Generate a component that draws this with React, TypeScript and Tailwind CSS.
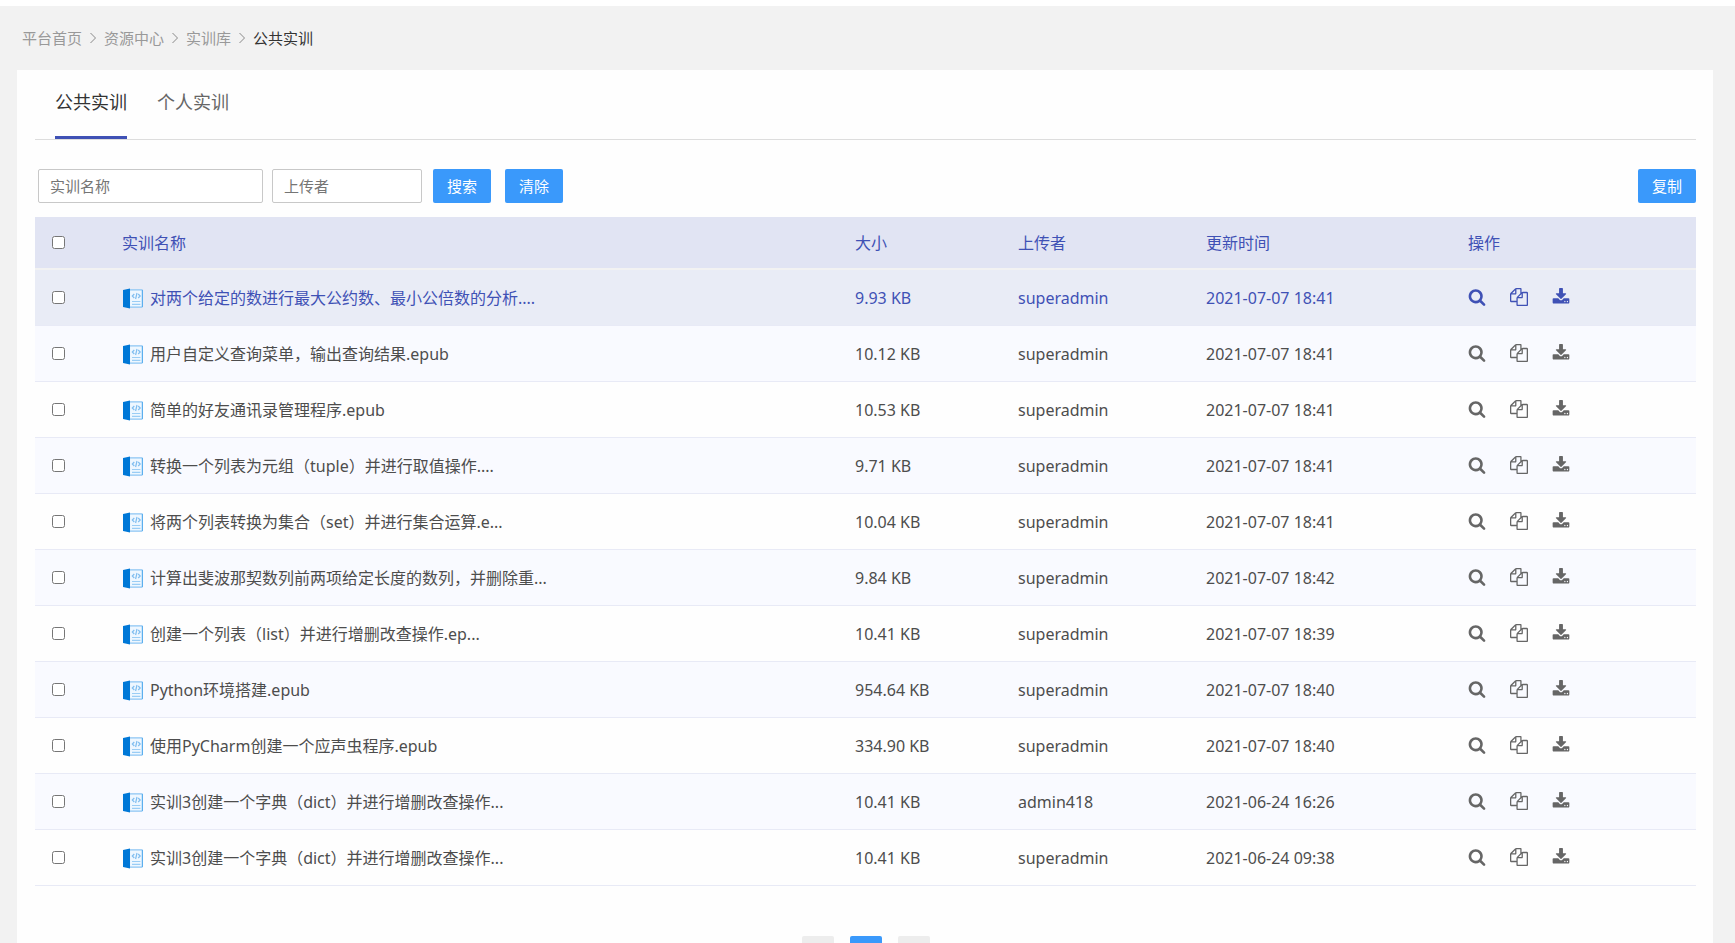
import React from "react";

type Row = { name: string; size: string; uploader: string; updated: string };

const rows: Row[] = [
  { name: "对两个给定的数进行最大公约数、最小公倍数的分析....", size: "9.93 KB", uploader: "superadmin", updated: "2021-07-07 18:41" },
  { name: "用户自定义查询菜单，输出查询结果.epub", size: "10.12 KB", uploader: "superadmin", updated: "2021-07-07 18:41" },
  { name: "简单的好友通讯录管理程序.epub", size: "10.53 KB", uploader: "superadmin", updated: "2021-07-07 18:41" },
  { name: "转换一个列表为元组（tuple）并进行取值操作....", size: "9.71 KB", uploader: "superadmin", updated: "2021-07-07 18:41" },
  { name: "将两个列表转换为集合（set）并进行集合运算.e...", size: "10.04 KB", uploader: "superadmin", updated: "2021-07-07 18:41" },
  { name: "计算出斐波那契数列前两项给定长度的数列，并删除重...", size: "9.84 KB", uploader: "superadmin", updated: "2021-07-07 18:42" },
  { name: "创建一个列表（list）并进行增删改查操作.ep...", size: "10.41 KB", uploader: "superadmin", updated: "2021-07-07 18:39" },
  { name: "Python环境搭建.epub", size: "954.64 KB", uploader: "superadmin", updated: "2021-07-07 18:40" },
  { name: "使用PyCharm创建一个应声虫程序.epub", size: "334.90 KB", uploader: "superadmin", updated: "2021-07-07 18:40" },
  { name: "实训3创建一个字典（dict）并进行增删改查操作...", size: "10.41 KB", uploader: "admin418", updated: "2021-06-24 16:26" },
  { name: "实训3创建一个字典（dict）并进行增删改查操作...", size: "10.41 KB", uploader: "superadmin", updated: "2021-06-24 09:38" },
];

const actions = [
  {
    label: "查看",
    path: "M1216 832q0-185-131.5-316.5t-316.5-131.5-316.5 131.5-131.5 316.5 131.5 316.5 316.5 131.5 316.5-131.5 131.5-316.5zm512 832q0 52-38 90t-90 38q-54 0-90-38l-343-342q-179 124-399 124-143 0-273.5-55.5t-225-150-150-225-55.5-273.5 55.5-273.5 150-225 225-150 273.5-55.5 273.5 55.5 225 150 150 225 55.5 273.5q0 220-124 399l343 343q37 37 37 90z",
  },
  {
    label: "复制",
    path: "M1696 384q40 0 68 28t28 68v1216q0 40-28 68t-68 28h-960q-40 0-68-28t-28-68v-288h-544q-40 0-68-28t-28-68v-672q0-40 20-88t48-76l408-408q28-28 76-48t88-20h416q40 0 68 28t28 68v328q68-40 128-40h416zm-544 213l-299 299h299v-299zm-640-384l-299 299h299v-299zm196 647l316-316v-416h-384v416q0 40-28 68t-68 28h-416v640h512v-256q0-40 20-88t48-76zm956 804v-1152h-384v416q0 40-28 68t-68 28h-416v640h896z",
  },
  {
    label: "下载",
    path: "M1344 1344q0-26-19-45t-45-19-45 19-19 45 19 45 45 19 45-19 19-45zm256 0q0-26-19-45t-45-19-45 19-19 45 19 45 45 19 45-19 19-45zm128-224v320q0 40-28 68t-68 28h-1472q-40 0-68-28t-28-68v-320q0-40 28-68t68-28h465l135 136q58 56 136 56t136-56l136-136h464q40 0 68 28t28 68zm-325-569q17 41-14 70l-448 448q-18 19-45 19t-45-19l-448-448q-31-29-14-70 17-39 59-39h256v-448q0-26 19-45t45-19h256q26 0 45 19t19 45v448h256q42 0 59 39z",
  },
];

function Chevron() {
  return (
    <svg viewBox="0 0 6 12" className="h-3 w-1.5" fill="none" stroke="#888" aria-hidden="true">
      <path d="M.5 1 5.5 6 .5 11" />
    </svg>
  );
}

function BookIcon() {
  return (
    <svg viewBox="0 0 21 21" className="h-[21px] w-[21px] shrink-0" aria-hidden="true">
      <rect x="7.5" y="1.9" width="12.9" height="17.2" rx=".5" fill="#eef7ff" stroke="#8cc5f3" strokeWidth="1.1" />
      <path d="M20.4 2v17" stroke="#5aaeee" strokeWidth="1.1" />
      <path d="M1 2 8 .5v20L1 19z" fill="#0078d7" />
      <path d="m12.3 6-2 2 2 2M16.2 6l2 2-2 2M15 5l-1.4 6" fill="none" stroke="#7fbdf0" strokeWidth="1.2" />
      <path d="M10 13.5h8.4M10 16.3h8.4" stroke="#9acdf5" strokeWidth="1.2" />
    </svg>
  );
}

const button = "h-[34px] rounded-xs bg-[#3a99fb] px-3.5 text-[15px] leading-5 text-white";
const input = "h-[34px] rounded-xs border border-[#c8c8c8] bg-white px-[11px] text-[15px] text-[#333] placeholder:text-[#757575] outline-none";
const box = "block h-[13px] w-[13px]";
const pageButton = "h-8 w-8 rounded-xs";

export default function App() {
  return (
    <div className="flex h-screen flex-col overflow-hidden bg-[#f2f2f2] font-['Noto_Sans','Noto_Sans_CJK_SC',sans-serif] text-[#4d4d4d]">
      <header className="h-1.5 shrink-0 bg-white" />
      <nav aria-label="breadcrumb" className="flex h-16 shrink-0 items-center gap-2 px-[22px] text-[15px] leading-5 text-[#999]">
        <a href="#home">平台首页</a>
        <Chevron />
        <a href="#resources">资源中心</a>
        <Chevron />
        <a href="#library">实训库</a>
        <Chevron />
        <span className="text-[#333]">公共实训</span>
      </nav>

      <main className="mr-[22px] ml-[17px] shrink-0 bg-[#fefefe] pr-[17px] pb-6 pl-[18px]">
        <div className="flex h-[70px] gap-[30px] border-b border-[#ddd] px-5 text-lg leading-6">
          <button type="button" className="h-[69px] border-b-3 border-[#3f51b5] pb-0.5 text-[#333]">公共实训</button>
          <button type="button" className="h-[69px] border-b-3 border-transparent pb-0.5 text-[#666]">个人实训</button>
        </div>

        <form className="mt-[29px] flex items-center pl-[3px]" onSubmit={(e) => e.preventDefault()}>
          <input aria-label="实训名称" placeholder="实训名称" className={`${input} mr-[9px] w-[225px]`} />
          <input aria-label="上传者" placeholder="上传者" className={`${input} mr-[11px] w-[150px]`} />
          <button type="submit" className={`${button} mr-3.5`}>搜索</button>
          <button type="reset" className={button}>清除</button>
          <button type="button" className={`${button} ml-auto`}>复制</button>
        </form>

        <table className="mt-3.5 w-full table-fixed border-collapse text-left text-base leading-6">
          <thead>
            <tr className="h-[53px] bg-[#e1e4f3] text-[#3f51b5] shadow-[inset_0_-2px_0_#f2f2f2] [&>th]:pb-0.5 [&>th]:font-normal">
              <th className="w-[87px] pl-[17px]">
                <input type="checkbox" aria-label="全选" className={box} />
              </th>
              <th>实训名称</th>
              <th className="w-[163px]">大小</th>
              <th className="w-[188px]">上传者</th>
              <th className="w-[262px]">更新时间</th>
              <th className="w-[228px]">操作</th>
            </tr>
          </thead>
          <tbody>
            {rows.map((row, i) => (
              <tr
                key={i}
                className={`h-14 shadow-[inset_0_-1px_0_#e8eaf6] ${
                  i === 0 ? "bg-[#e9ecf6] text-[#3f51b5]" : i % 2 === 1 ? "bg-[#f9faff]" : ""
                }`}
              >
                <td className="pb-0.5 pl-[17px]">
                  <input type="checkbox" aria-label={row.name} className={box} />
                </td>
                <td>
                  <div className="flex items-center gap-[7px]">
                    <BookIcon />
                    <span className="truncate">{row.name}</span>
                  </div>
                </td>
                <td>{row.size}</td>
                <td>{row.uploader}</td>
                <td>{row.updated}</td>
                <td className="pb-0.5">
                  <div className={`flex gap-6 ${i === 0 ? "" : "text-[#666]"}`}>
                    {actions.map((a) => (
                      <button key={a.label} type="button" aria-label={a.label}>
                        <svg viewBox="0 0 1792 1792" className="h-[18px] w-[18px]" fill="currentColor" aria-hidden="true">
                          <path d={a.path} />
                        </svg>
                      </button>
                    ))}
                  </div>
                </td>
              </tr>
            ))}
          </tbody>
        </table>

        <nav aria-label="pagination" className="mt-[50px] flex justify-center gap-4">
          <button type="button" aria-label="上一页" className={`${pageButton} bg-[#ededed]`} />
          <button type="button" aria-label="第1页" aria-current="page" className={`${pageButton} bg-[#3a99fb]`} />
          <button type="button" aria-label="下一页" className={`${pageButton} bg-[#ededed]`} />
        </nav>
      </main>
    </div>
  );
}
